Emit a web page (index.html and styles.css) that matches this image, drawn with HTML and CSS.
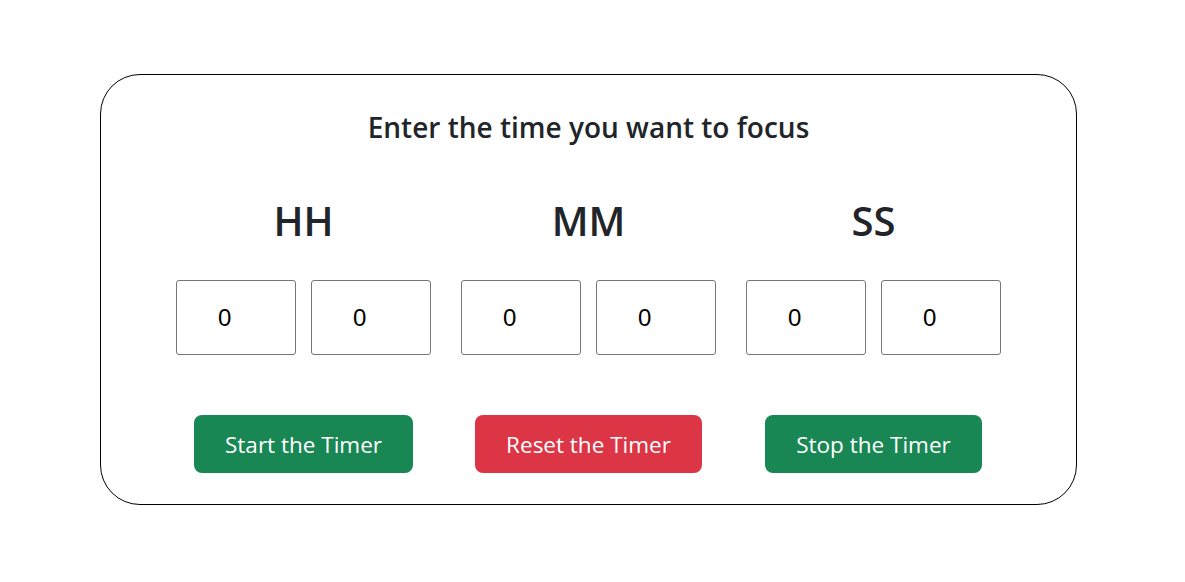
FILE: index.html
```html
<!DOCTYPE html>
<html lang="en">
<head>
<meta charset="utf-8">
<title>Focus Timer</title>
<link rel="stylesheet" href="styles.css">
</head>
<body>
<div class="card">
  <h3 class="title">Enter the time you want to focus</h3>
  <div class="grid">
    <h1 class="unit">HH</h1>
    <h1 class="unit">MM</h1>
    <h1 class="unit">SS</h1>
    <div class="pair"><input class="digit" type="text" value="0"><input class="digit" type="text" value="0"></div>
    <div class="pair"><input class="digit" type="text" value="0"><input class="digit" type="text" value="0"></div>
    <div class="pair"><input class="digit" type="text" value="0"><input class="digit" type="text" value="0"></div>
    <div class="btn-cell"><button class="btn btn-green">Start the Timer</button></div>
    <div class="btn-cell"><button class="btn btn-red">Reset the Timer</button></div>
    <div class="btn-cell"><button class="btn btn-green">Stop the Timer</button></div>
  </div>
</div>
</body>
</html>
```
FILE: styles.css
```css
* { box-sizing: border-box; }
body {
  margin: 0;
  background: #fff;
  font-family: "Open Sans", "Noto Sans", sans-serif;
  color: #212529;
}
.card {
  margin: 74px 0 0 100px;
  width: 977px;
  height: 431px;
  border: 1px solid #000;
  border-radius: 40px;
  padding-top: 35px;
}
.title {
  margin: 0;
  text-align: center;
  font-size: 28px;
  font-weight: 600;
  line-height: 34px;
}
.grid {
  display: grid;
  grid-template-columns: repeat(3, 285px);
  justify-content: center;
  margin-top: 53px;
}
.unit {
  margin: 0;
  text-align: center;
  font-size: 40px;
  font-weight: 600;
  line-height: 48px;
}
.pair {
  display: flex;
  justify-content: center;
  gap: 15px;
  margin-top: 35px;
}
.digit {
  width: 120px;
  height: 75px;
  border: 1px solid #767676;
  border-radius: 3px;
  padding: 1px 0 0 41px;
  font-family: "Liberation Sans", Arial, sans-serif;
  font-size: 24px;
  color: #000;
  background: #fff;
}
.btn-cell {
  display: flex;
  justify-content: center;
  margin-top: 60px;
}
.btn {
  height: 58px;
  padding: 0 31px;
  border: none;
  border-radius: 8px;
  color: #fff;
  font-family: "Open Sans", "Noto Sans", sans-serif;
  font-size: 22.5px;
  cursor: pointer;
}
.btn-green { background: #198754; }
.btn-red { background: #dc3545; }
```
